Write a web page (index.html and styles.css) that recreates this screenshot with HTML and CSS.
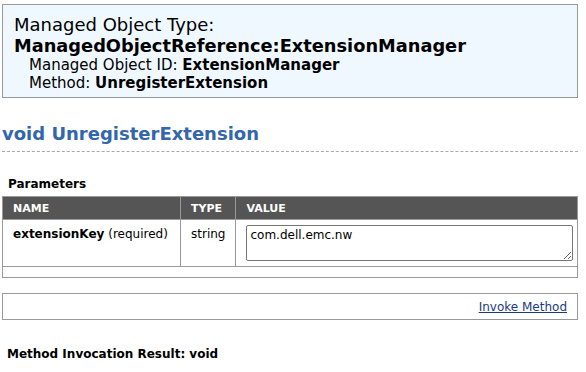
FILE: index.html
```html
<!DOCTYPE html>
<html>
<head>
<meta charset="utf-8">
<link rel="stylesheet" href="styles.css">
</head>
<body>
<div class="header">
  <div class="type-label">Managed Object Type:</div>
  <div class="type-name">ManagedObjectReference:ExtensionManager</div>
  <div class="meta">Managed Object ID: <b>ExtensionManager</b></div>
  <div class="meta">Method: <b>UnregisterExtension</b></div>
</div>
<h1 class="method-title">void UnregisterExtension</h1>
<div class="section-label">Parameters</div>
<table class="params">
  <thead>
    <tr><th class="c-name">NAME</th><th class="c-type">TYPE</th><th class="c-value">VALUE</th></tr>
  </thead>
  <tbody>
    <tr>
      <td class="c-name"><b>extensionKey</b> (required)</td>
      <td class="c-type">string</td>
      <td class="c-value"><textarea class="value-input">com.dell.emc.nw</textarea></td>
    </tr>
    <tr class="empty"><td colspan="3"></td></tr>
  </tbody>
</table>
<div class="invoke"><a href="#" class="invoke-link">Invoke Method</a></div>
<div class="result">Method Invocation Result: void</div>
</body>
</html>
```
FILE: styles.css
```css
html, body { margin: 0; padding: 0; background: #fff; }
body {
  font-family: "DejaVu Sans", Verdana, sans-serif;
  color: #000;
  padding: 4px 8px 0 2px;
  width: 576px;
  box-sizing: content-box;
}
.header {
  background: #f0f8ff;
  border: 1px solid #999;
  padding: 9px 11px 5px 11px;
}
.type-label { font-size: 18px; line-height: 21px; }
.type-name { font-size: 17.8px; font-weight: bold; line-height: 22px; }
.meta { font-size: 15px; line-height: 17.5px; padding-left: 15px; }
.method-title {
  margin: 24px 0 0 0;
  font-size: 18px;
  color: #3366aa;
  font-weight: bold;
  line-height: 24px;
  padding-bottom: 5px;
  border-bottom: 1px dashed #aaa;
}
.section-label {
  font-size: 12px;
  font-weight: bold;
  margin: 25px 0 0 6px;
  line-height: 15px;
}
.params {
  width: 100%;
  border-collapse: collapse;
  margin-top: 4px;
  font-size: 12px;
}
.params th {
  background: #555;
  color: #fff;
  font-size: 11px;
  text-align: left;
  height: 23px;
  padding: 0 10px;
  border: 1px solid #999;
  box-sizing: border-box;
}
.params td {
  border: 1px solid #999;
  vertical-align: top;
  padding: 7px 10px 6px 10px;
  height: 47px;
  box-sizing: border-box;
}
.params td.c-value { padding: 5px 4px 5px 10px; }
.params .c-name { width: 178px; }
.params .c-type { width: 55px; }
.params tr.empty td { height: 11px; padding: 0; }
.value-input {
  display: block;
  width: 100%;
  height: 36px;
  box-sizing: border-box;
  font-family: "DejaVu Sans", Verdana, sans-serif;
  font-size: 12px;
  border: 1px solid #767676;
  border-radius: 2px;
  padding: 2px 3px;
  resize: vertical;
}
.invoke {
  margin-top: 15px;
  border: 1px solid #999;
  height: 25px;
  display: flex;
  align-items: center;
  justify-content: flex-end;
  padding-right: 10px;
}
.invoke-link { color: #1c3a80; font-size: 12px; }
.result {
  font-size: 12px;
  font-weight: bold;
  margin: 27px 0 0 5px;
}
```
